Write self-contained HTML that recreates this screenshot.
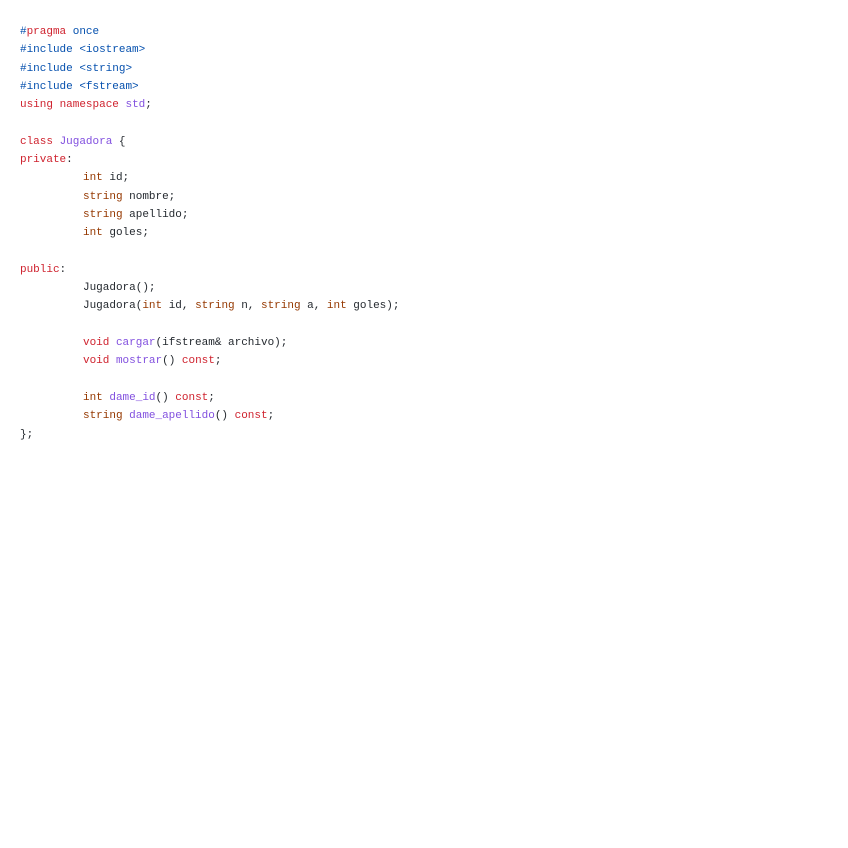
<!DOCTYPE html>
<html><head><style>
html,body{margin:0;background:#fff;}
pre{margin:0;position:absolute;left:20px;top:23px;font-family:"Liberation Mono",monospace;font-size:11px;line-height:18.3px;color:#24292f;letter-spacing:-0.01px;}
.r{color:#cf222e}.b{color:#0550ae}.p{color:#8250df}.t{color:#953800}
.i{display:inline-block;width:63px}
</style></head><body>
<pre><span class="b">#</span><span class="r">pragma</span> <span class="b">once</span>
<span class="b">#include &lt;iostream&gt;</span>
<span class="b">#include &lt;string&gt;</span>
<span class="b">#include &lt;fstream&gt;</span>
<span class="r">using</span> <span class="r">namespace</span> <span class="p">std</span>;

<span class="r">class</span> <span class="p">Jugadora</span> {
<span class="r">private</span>:
<span class="i"></span><span class="t">int</span> id;
<span class="i"></span><span class="t">string</span> nombre;
<span class="i"></span><span class="t">string</span> apellido;
<span class="i"></span><span class="t">int</span> goles;

<span class="r">public</span>:
<span class="i"></span>Jugadora();
<span class="i"></span>Jugadora(<span class="t">int</span> id, <span class="t">string</span> n, <span class="t">string</span> a, <span class="t">int</span> goles);

<span class="i"></span><span class="r">void</span> <span class="p">cargar</span>(ifstream&amp; archivo);
<span class="i"></span><span class="r">void</span> <span class="p">mostrar</span>() <span class="r">const</span>;

<span class="i"></span><span class="t">int</span> <span class="p">dame_id</span>() <span class="r">const</span>;
<span class="i"></span><span class="t">string</span> <span class="p">dame_apellido</span>() <span class="r">const</span>;
};</pre>
</body></html>
